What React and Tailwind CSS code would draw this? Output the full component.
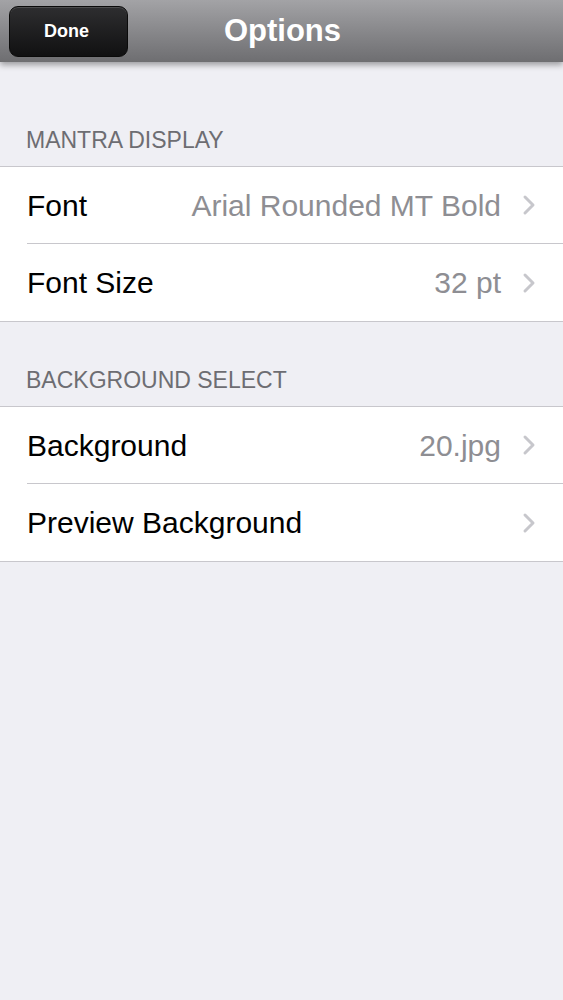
const Chevron = () => (
  <svg width="14" height="22" viewBox="0 0 14 22" className="shrink-0">
    <path d="M3 3l8 8-8 8" fill="none" stroke="#c7c7cc" strokeWidth="3" strokeLinecap="round" strokeLinejoin="round" />
  </svg>
);

const Row = ({ label, value, last }) => (
  <div className="flex items-center h-[77px] pl-[27px] bg-white">
    <div className={`flex items-center flex-1 h-full pr-[27px] ${last ? "" : "border-b border-[#c8c7cc]"}`}>
      <span className="flex-1 text-[30px] text-black">{label}</span>
      {value && <span className="text-[30px] text-[#8e8e93] mr-[21px]">{value}</span>}
      <Chevron />
    </div>
  </div>
);

const Section = ({ title, rows, first }) => (
  <div>
    <div
      className={`flex items-end pb-[9px] pl-[26px] text-[23px] text-[#6d6d72] border-b border-[#c8c7cc] ${
        first ? "h-[105px]" : "h-[85px]"
      }`}
    >
      {title}
    </div>
    <div className="border-b border-[#c8c7cc]">
      {rows.map((r, i) => (
        <Row key={r.label} label={r.label} value={r.value} last={i === rows.length - 1} />
      ))}
    </div>
  </div>
);

export default function App() {
  return (
    <div className="w-[563px] h-[1000px] bg-[#efeff4] font-['Liberation_Sans',Arial,sans-serif] overflow-hidden">
      {/* Nav bar */}
      <div className="relative h-[62px] bg-gradient-to-b from-[#a3a3a6] to-[#6e6e71] shadow-[0_3px_6px_rgba(0,0,0,0.35)] flex items-center">
        <button className="ml-[9px] w-[119px] h-[51px] rounded-[9px] bg-gradient-to-b from-[#2e2e30] to-[#111112] border border-[#0a0a0a] shadow-[inset_0_1px_0_rgba(255,255,255,0.15)] text-white font-bold text-[18px] pr-[4px]">
          Done
        </button>
        <div className="absolute left-0 right-0 text-center pointer-events-none text-white font-bold text-[31px] pl-[2px]">
          Options
        </div>
      </div>

      <Section
        first
        title="MANTRA DISPLAY"
        rows={[
          { label: "Font", value: "Arial Rounded MT Bold" },
          { label: "Font Size", value: "32 pt" },
        ]}
      />
      <Section
        title="BACKGROUND SELECT"
        rows={[
          { label: "Background", value: "20.jpg" },
          { label: "Preview Background" },
        ]}
      />
    </div>
  );
}
